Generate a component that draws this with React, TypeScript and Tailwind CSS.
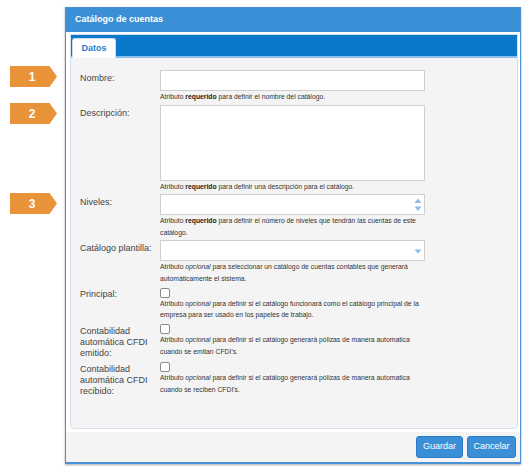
import React from "react";

function Badge({ n, top }: { n: string; top: string }) {
  return (
    <div
      className={`absolute left-[10px] ${top} w-[47px] h-[21px] bg-[#e8923a] [clip-path:polygon(0_0,84%_0,100%_50%,84%_100%,0_100%)] flex items-center justify-center pr-[3px] text-white font-bold text-[12px] leading-none`}
    >
      {n}
    </div>
  );
}

function Label({ children }: { children: React.ReactNode }) {
  return (
    <div className="w-[80px] shrink-0 pt-[3px] leading-[11px] text-[9px] text-[#444]">
      {children}
    </div>
  );
}

function Help({ children }: { children: React.ReactNode }) {
  return (
    <div className="text-[6.8px] leading-[11.5px] text-[#333] whitespace-nowrap">
      {children}
    </div>
  );
}

function Req() {
  return <span className="font-bold text-[#222]">requerido</span>;
}
function Opc() {
  return <span className="italic">opcional</span>;
}

function Check() {
  return (
    <div className="mt-[1.5px] w-[10px] h-[10px] rounded-[2px] border border-[#8a8a8a] bg-white" />
  );
}

export default function App() {
  return (
    <div className="relative w-[525px] h-[467px] bg-white overflow-hidden font-['Liberation_Sans',Arial,sans-serif]">
      <div className="pt-[7px] pl-[65px]">
        <div className="w-[456px] border border-b-2 border-[#4a92d5] bg-white shadow-[0_1px_2px_rgba(0,0,0,0.35)] flex flex-col">
          <div className="h-[24px] bg-[#3a8fd6] flex items-center pl-[9px] text-white font-bold text-[9px]">
            Catálogo de cuentas
          </div>
          <div className="mt-[2px] ml-[4px] mr-[2px] h-[395px] flex flex-col border border-[#d3e1ee] rounded-b-[4px] overflow-hidden bg-[#f4f4f4]">
            <div className="h-[23px] shrink-0 bg-[#0a79c9] shadow-[inset_0_-2px_0_#8cc0ea] flex items-end pl-[1px]">
              <div className="w-[44px] h-[20px] bg-white rounded-t-[3px] border border-b-0 border-[#c9dcee] flex items-center justify-center text-[9px] font-bold text-[#1f7fcf]">
                Datos
              </div>
            </div>
            <div className="flex-1 pt-[12px] pl-[9px] flex flex-col gap-[2px]">
              {/* Nombre */}
              <div className="flex">
                <Label>Nombre:</Label>
                <div className="w-[265px]">
                  <div className="h-[21px] border border-[#cfcfcf] bg-white" />
                  <Help>
                    Atributo <Req /> para definir el nombre del catálogo.
                  </Help>
                </div>
              </div>
              {/* Descripción */}
              <div className="flex">
                <Label>Descripción:</Label>
                <div className="w-[265px]">
                  <div className="h-[76px] border border-[#cfcfcf] bg-white" />
                  <Help>
                    Atributo <Req /> para definir una descripción para el catálogo.
                  </Help>
                </div>
              </div>
              {/* Niveles */}
              <div className="flex">
                <Label>Niveles:</Label>
                <div className="w-[265px]">
                  <div className="relative h-[21px] border border-[#cfcfcf] bg-white">
                    <svg
                      className="absolute right-[2px] top-[2.5px]"
                      width="8"
                      height="14"
                      viewBox="0 0 8 14"
                    >
                      <polygon points="0.5,5 4,0.5 7.5,5" fill="#8dbde6" />
                      <polygon points="0.5,8.5 7.5,8.5 4,13" fill="#8dbde6" />
                    </svg>
                  </div>
                  <Help>
                    Atributo <Req /> para definir el número de niveles que tendrán las cuentas de este
                    <br />
                    catálogo.
                  </Help>
                </div>
              </div>
              {/* Catálogo plantilla */}
              <div className="flex">
                <Label>Catálogo plantilla:</Label>
                <div className="w-[265px]">
                  <div className="relative h-[21px] border border-[#cfcfcf] bg-white">
                    <svg
                      className="absolute right-[2px] top-[7.5px]"
                      width="8"
                      height="5"
                      viewBox="0 0 8 5"
                    >
                      <polygon points="0.5,0.5 7.5,0.5 4,4.5" fill="#8dbde6" />
                    </svg>
                  </div>
                  <Help>
                    Atributo <Opc /> para seleccionar un catálogo de cuentas contables que generará
                    <br />
                    automáticamente el sistema.
                  </Help>
                </div>
              </div>
              {/* Principal */}
              <div className="flex">
                <Label>Principal:</Label>
                <div className="w-[265px]">
                  <Check />
                  <Help>
                    Atributo <Opc /> para definir si el catálogo funcionará como el catálogo principal de la
                    <br />
                    empresa para ser usado en los papeles de trabajo.
                  </Help>
                </div>
              </div>
              {/* Emitido */}
              <div className="flex">
                <Label>
                  Contabilidad
                  <br />
                  automática CFDI
                  <br />
                  emitido:
                </Label>
                <div className="w-[265px]">
                  <Check />
                  <Help>
                    Atributo <Opc /> para definir si el catálogo generará pólizas de manera automatica
                    <br />
                    cuando se emitan CFDI's.
                  </Help>
                </div>
              </div>
              {/* Recibido */}
              <div className="flex">
                <Label>
                  Contabilidad
                  <br />
                  automática CFDI
                  <br />
                  recibido:
                </Label>
                <div className="w-[265px]">
                  <Check />
                  <Help>
                    Atributo <Opc /> para definir si el catálogo generará pólizas de manera automatica
                    <br />
                    cuando se reciben CFDI's.
                  </Help>
                </div>
              </div>
            </div>
          </div>
          <div className="mt-[3px] h-[30px] bg-[#f4f4f4] flex items-center justify-end gap-[4px] pr-[4px]">
            <button className="w-[47px] h-[22px] bg-[#3a8fd6] border border-[#2c7cc5] rounded-[3px] text-white text-[9px] flex items-center justify-center">
              Guardar
            </button>
            <button className="w-[49px] h-[22px] bg-[#3a8fd6] border border-[#2c7cc5] rounded-[3px] text-white text-[9px] flex items-center justify-center">
              Cancelar
            </button>
          </div>
        </div>
      </div>
      <Badge n="1" top="top-[66px]" />
      <Badge n="2" top="top-[103px]" />
      <Badge n="3" top="top-[193px]" />
    </div>
  );
}
